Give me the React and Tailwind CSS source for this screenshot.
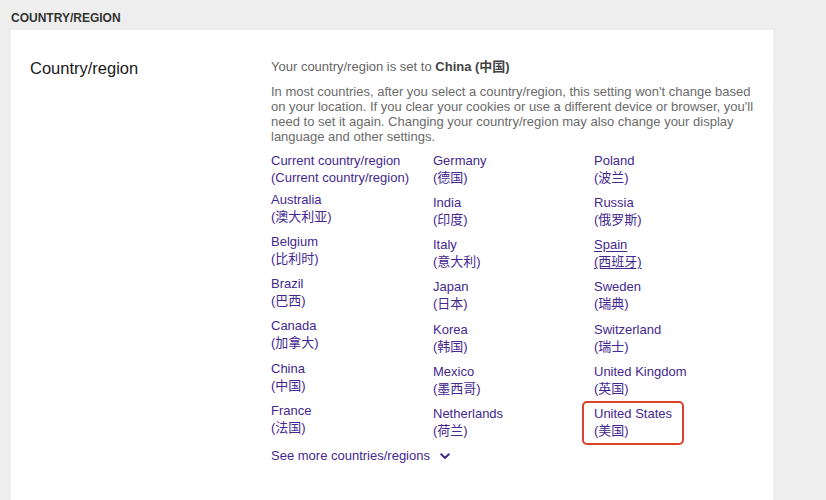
import React from "react";

const col1 = [
  ["Current country/region", "(Current country/region)"],
  ["Australia", "(澳大利亚)"],
  ["Belgium", "(比利时)"],
  ["Brazil", "(巴西)"],
  ["Canada", "(加拿大)"],
  ["China", "(中国)"],
  ["France", "(法国)"],
];
const col2 = [
  ["Germany", "(德国)"],
  ["India", "(印度)"],
  ["Italy", "(意大利)"],
  ["Japan", "(日本)"],
  ["Korea", "(韩国)"],
  ["Mexico", "(墨西哥)"],
  ["Netherlands", "(荷兰)"],
];
const col3 = [
  ["Poland", "(波兰)"],
  ["Russia", "(俄罗斯)"],
  ["Spain", "(西班牙)", "underline"],
  ["Sweden", "(瑞典)"],
  ["Switzerland", "(瑞士)"],
  ["United Kingdom", "(英国)"],
  ["United States", "(美国)", "boxed"],
];

function Item({ item, first, col1First }) {
  const [en, zh, mode] = item;
  return (
    <div
      className={
        "relative self-start " +
        (first ? "" : col1First ? "mt-[5px]" : "mt-[8.3px]")
      }
    >
      <a
        className={
          "block text-[#44288f] leading-[17px] " +
          (mode === "underline" ? "underline underline-offset-2" : "")
        }
      >
        <span className="block">{en}</span>
        <span className="block">{zh}</span>
      </a>
      {mode === "boxed" && (
        <span className="absolute left-[-12px] top-[-4px] right-[-12px] bottom-[-6px] rounded-[5px] border-2 border-[#d9432c] pointer-events-none" />
      )}
    </div>
  );
}

function Column({ items, width, isCol1 }) {
  return (
    <div className="flex flex-col" style={{ width }}>
      {items.map((it, i) => (
        <Item key={i} item={it} first={i === 0} col1First={isCol1 && i === 1} />
      ))}
    </div>
  );
}

export default function App() {
  return (
    <div
      className="w-[826px] h-[500px] overflow-hidden bg-[#eeeeee]"
      style={{ fontFamily: '"Liberation Sans", Arial, "Noto Sans CJK SC", sans-serif' }}
    >
      <div className="pt-[11px] pl-[11px] text-[12px] leading-[14px] font-bold text-[#333333] mb-[5px]">
        COUNTRY/REGION
      </div>
      <div className="ml-[11px] w-[762px] h-[470px] bg-white pt-[28px] pl-[19px] flex">
        <div className="w-[241px] shrink-0 text-[16.5px] leading-[20px] text-[#1a1a1a]">
          Country/region
        </div>
        <div className="w-[490px] text-[13px]">
          <div className="leading-[15px] mt-[0.5px] text-[#666666]">
            Your country/region is set to{" "}
            <span className="font-bold text-[#444444]">China (中国)</span>
          </div>
          <p className="mt-[10px] leading-[15px] text-[#6b6b6b] w-[490px]">
            In most countries, after you select a country/region, this setting won't change based on your location. If you clear your cookies or use a different device or browser, you'll need to set it again. Changing your country/region may also change your display language and other settings.
          </p>
          <div className="mt-[8px] flex">
            <Column items={col1} width={162} isCol1 />
            <Column items={col2} width={161} />
            <Column items={col3} width={161} />
          </div>
          <a className="mt-[8px] flex items-center leading-[17px] text-[#44288f]">
            See more countries/regions
            <svg className="ml-[10px] mt-[2px]" width="10" height="7" viewBox="0 0 10 7" fill="none">
              <path d="M1.2 1.3 L5 5 L8.8 1.3" stroke="#44288f" strokeWidth="2" strokeLinecap="round" strokeLinejoin="round" />
            </svg>
          </a>
        </div>
      </div>
    </div>
  );
}
